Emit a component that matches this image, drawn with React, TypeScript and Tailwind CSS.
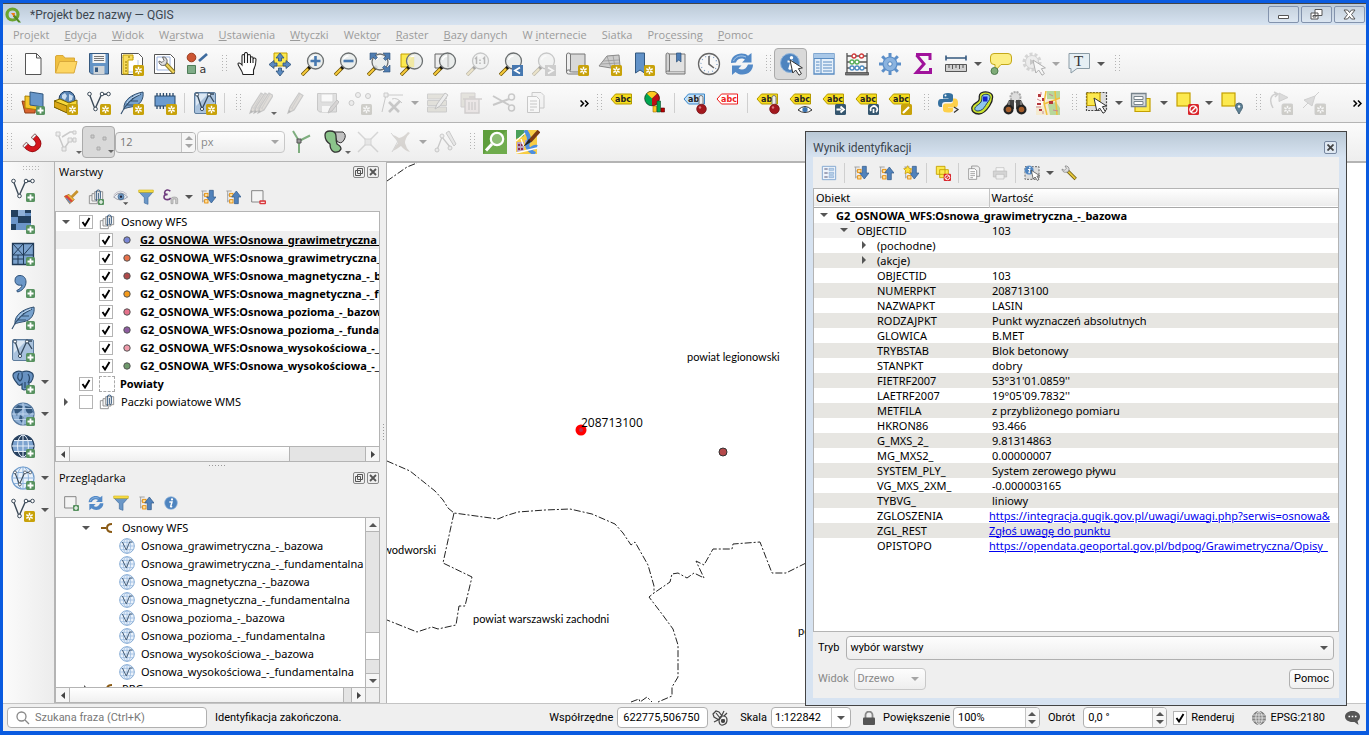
import React from "react";

type P = { children?: React.ReactNode };

/* ---------- drawing helpers ---------- */
const Svg = ({ children, size = 24 }: P & { size?: number }) => (
  <svg width={size} height={size} viewBox="0 0 24 24" fill="none" aria-hidden="true" className="shrink-0">
    {children}
  </svg>
);
const Star = ({ c = "#c8a20a" }: { c?: string }) => (
  <g>
    <rect x="13" y="13" width="11" height="11" rx="1.5" fill={c} />
    <path d="M18.5 14.8v7.4M15.3 16.6l6.4 3.8M21.7 16.6l-6.4 3.8" stroke="#fff" strokeWidth="1.5" />
    <circle cx="18.5" cy="18.5" r="0.9" fill={c} />
  </g>
);
const Plus = () => (
  <g>
    <rect x="15" y="15" width="9" height="9" rx="1.5" fill="#589260" />
    <path d="M19.5 16.5v6M16.5 19.5h6" stroke="#fff" strokeWidth="1.8" />
  </g>
);
const Lens = ({ x = 14.5, y = 9 }: { x?: number; y?: number }) => (
  <g>
    <path d="M8.5 15.5 1 23" stroke="#6b5200" strokeWidth="3.6" />
    <path d="M7 17 1.3 22.7" stroke="#f8cb3c" strokeWidth="2" />
    <path d="m10 14-2.4 2.4" stroke="#111" strokeWidth="3.2" />
    <circle cx={x} cy={y} r="8" fill="#e9eceb" fillOpacity="0.9" stroke="#6b6f70" strokeWidth="1.3" />
    <path d="M9.5 8a5.2 5.2 0 0 1 5-4" stroke="#fff" strokeWidth="1.4" />
  </g>
);
const Cursor = () => (
  <path d="m11 8 2.8 13 2.9-3 3.3 5.2 2.4-1.5-3-5 4-.8z" fill="#fff" stroke="#333" strokeWidth="1" />
);
const Vee = () => (
  <g stroke="#3c4a58" strokeWidth="1.4">
    <path d="M2.5 3.5 8 18 14.500 3.500 21.500 3" />
    <g fill="#fff" strokeWidth="1">
      <circle cx="2.500" cy="3" r="1.800" />
      <circle cx="8.500" cy="18" r="1.800" />
      <circle cx="15" cy="3" r="1.800" />
      <circle cx="21.500" cy="3" r="1.800" />
    </g>
  </g>
);
const Tag = ({ t = "abc", fill = "#f5dd1e", line = "#b79a00", ink = "#222" }) => (
  <g>
    <path d="M1 8 5.500 3H21.500V13H5.500z" fill={fill} stroke={line} strokeWidth="1" />
    <text x="5" y="11" fontSize="8" fontWeight="700" fontFamily="DejaVu Sans, sans-serif" fill={ink}>{t}</text>
  </g>
);
const Pin = () => (
  <g>
    <path d="M16 13V6.500a2 2 0 0 1 4 0V13" fill="#eee" stroke="#777" strokeWidth="1" />
    <circle cx="18.500" cy="18" r="4.800" fill="#a3181e" stroke="#6e0c10" strokeWidth="0.700" />
    <circle cx="17" cy="16.500" r="1.200" fill="#d9797c" />
  </g>
);
const DarkBadge = ({ children }: P) => (
  <g>
    <rect x="13" y="13" width="11" height="11" rx="1.500" fill="#35566f" />
    {children}
  </g>
);
const Pencil = ({ x = 0 }: { x?: number }) => (
  <g transform={`translate(${x} 0)`}>
    <path d="M3 22 5 16 14 2l4 2.500L9 19z" fill="#c4b09a" stroke="#777" strokeWidth="1.200" />
    <path d="m5 16 4 3M15 3 7 17" stroke="#888" />
    <path d="m3 22 1-3 2 1.700z" fill="#444" />
  </g>
);
const TreeLines = ({ children }: P) => (
  <Svg>
    <path d="M2 3h8M4 3v17M4 9h4M4 18h4" stroke="#999" strokeWidth="1.300" />
    <rect x="7" y="6.500" width="5" height="5" fill="#ffe1a3" stroke="#e48a00" strokeWidth="1.300" />
    <rect x="7" y="16" width="5" height="5" fill="#ffe1a3" stroke="#e48a00" strokeWidth="1.300" />
    {children}
  </Svg>
);
const arrowDown = <path d="M14 2h6v10h4l-7 9-7-9h4z" fill="#5182bb" stroke="#2c5585" strokeWidth="1" />;
const arrowUp = <path d="M14 22h6V12h4l-7-9-7 9h4z" fill="#5182bb" stroke="#2c5585" strokeWidth="1" />;
const refresh = (
  <g fill="#5289c7">
    <path d="M1 11C1 5 6 1.500 11.500 1.500c3 0 5 .8 6.500 2.300L21.500 1v9.500H12l3-3C12.500 5.500 7 6 6 10.500z" />
    <path d="M23 12.500c0 6-4.500 10-10.500 10-3 0-5.200-1-7-2.600L2 23v-9.500h9.500l-3 3c3 2 7.500 1.500 9.500-4z" />
    <path d="M3.500 9C5 4.500 11 2.500 16 5" stroke="#a8c9ea" strokeWidth="1" fill="none" />
  </g>
);
const globe = (dark: boolean) => (
  <g>
    <circle cx="12" cy="12" r="11" fill={dark ? "#7da3cf" : "#eaf2fb"} stroke={dark ? "#27405e" : "#6f9bcb"} strokeWidth="1.200" />
    {dark && <path d="M3 6.500h18L18.500 3 12 1 5.500 3zM3 17.500h18L18.500 21 12 23l-6.500-2z" fill="#27405e" />}
    <path d="M12 1v22M1 12h22M3 6.500h18M3 17.500h18" stroke={dark ? "#e6eef8" : "#8fb4dc"} strokeWidth="1" />
    <ellipse cx="12" cy="12" rx="5.500" ry="11" stroke={dark ? "#e6eef8" : "#8fb4dc"} strokeWidth="1" />
  </g>
);
const feather = (
  <g>
    <path d="M4 18C3 9 12 3 23 1c1 6-2 14-12 15-3 .5-5 1-7 2z" fill="#78a2ce" stroke="#33506f" strokeWidth="1" />
    <path d="M1 23C5 14 12 7 21 3M7 14l8 0M10 10h8M12 8l1-3" stroke="#33506f" strokeWidth="1.100" />
    <path d="M7 12C9 8 14 5 20 3" stroke="#c9dff4" strokeWidth="1" />
  </g>
);
const filter = (
  <g>
    <path d="M1.500 4.500h21L15 13v10l-5.500-2v-8z" fill="#6b97c7" stroke="#3e6b9e" strokeWidth="1" />
    <path d="M1 1.500h22v3.500H1z" fill="#fbe14b" stroke="#c9a800" strokeWidth=".8" />
  </g>
);
const group = (
  <g stroke="#888" strokeWidth="1.300">
    <path d="M6 10H2v12h12v-3" />
    <path d="M10 7H6v11h12v-2" fill="#f2f2f2" />
    <path d="M10 4h12v12H10z" fill="#f7f7f7" />
    <path d="M12.500 18V4.500a3 3 0 0 1 6 0V14a1.500 1.500 0 0 1-3 0V6" stroke="#35597f" strokeWidth="1.500" />
  </g>
);
const chip = (
  <g>
    <path d="M4 2v16M7.200 2v16M10.400 2v16M13.600 2v16M16.800 2v16M20 2v16" stroke="#29496b" strokeWidth="1.300" />
    <rect x="2" y="5" width="20" height="10" fill="#6b9bd0" stroke="#29496b" />
  </g>
);
const vBox = (
  <g>
    <rect x="1.500" y="1.500" width="21" height="21" rx="1.500" fill="#a9c2dd" stroke="#5d7c9c" />
    <path d="M3 3h12L3 15z" fill="#dbe7f3" />
    <path d="M4 3 9 18 16 3l5 8M16 3h5" stroke="#34495e" strokeWidth="1.300" />
    <g fill="#fff" stroke="#34495e"><circle cx="4" cy="3.500" r="1.600" /><circle cx="9" cy="18" r="1.600" /><circle cx="16" cy="3.500" r="1.600" /></g>
  </g>
);
const info = (
  <g>
    <circle cx="11" cy="11" r="9.500" fill="#4e84bf" stroke="#8fb4dc" strokeWidth="1" />
    <circle cx="12.500" cy="5.700" r="1.700" fill="#fff" />
    <path d="M8.500 9.500h4l-2 7q1 .5 2-.7" stroke="#fff" strokeWidth="2.200" />
  </g>
);
const yellowSq = <rect x="2" y="2" width="13" height="13" fill="#fce94f" stroke="#c4a000" strokeWidth="1.200" />;
const noEntry = (
  <g>
    <rect x="13" y="13" width="11" height="11" rx="1.500" fill="#d9262c" />
    <circle cx="18.500" cy="18.500" r="3.600" stroke="#fff" strokeWidth="1.400" />
    <path d="m16 21 5-5" stroke="#fff" strokeWidth="1.400" />
  </g>
);

/* ---------- icons ---------- */
const ic = {
  new: <path d="M4.500 1.500h11l4.500 4.500v16.500H4.500zM15.500 1.500V6H20" fill="#fff" stroke="#555" />,
  open: (
    <g stroke="#d9a93a">
      <path d="M1.500 21V5q0-1.500 1.500-1.500h6l2 2.500h9.500v4" fill="#f0c040" />
      <path d="M1.500 21 5.500 9.500h17.500L20 21z" fill="#fdd663" />
    </g>
  ),
  save: (
    <g>
      <path d="M2.500 1.500h19v20.500h-17l-2-2z" fill="#6494c6" stroke="#36597f" />
      <path d="M5.500 2h13v9h-13z" fill="#f4f4f4" /><path d="M7 4.500h10M7 6.500h10M7 8.500h10" stroke="#777" />
      <path d="M6.500 14h11v8h-11z" fill="#cfd4d8" /><path d="M8 15.500h3V20H8z" fill="#36597f" />
    </g>
  ),
  layout: (
    <g>
      <path d="M1.500 1.500h17l4 4v17h-21z" fill="#fff" stroke="#555" />
      <path d="M2 5.500h12M8 20h8M18 8v10" stroke="#b9cbe8" />
      <path d="M3 3h10v5H8v14H3z" fill="#f8dc5c" stroke="#c4a000" /><path d="M5 10h2M5 13h2M5 16h2M5 19h2M9 4v2" stroke="#8a7000" />
      <Star />
    </g>
  ),
  layoutMgr: (
    <g>
      <path d="M1.500 2.500h16l4 4v15h-20z" fill="#fff" stroke="#555" /><path d="M4 5h13v13H4z" stroke="#9db4e0" />
      <path d="m12 11 9 9.500" stroke="#8d7a22" strokeWidth="4" /><path d="m13 12 8 8.500" stroke="#f0d45c" strokeWidth="2" />
      <path d="M9.500 5a4 4 0 0 1 4.500 5l-1.500 3-3 .5A4 4 0 0 1 6 9l3 1.500 2-2z" fill="#ddd" stroke="#666" />
    </g>
  ),
  style: (
    <g>
      <circle cx="5.500" cy="5.500" r="4.300" fill="#cc5533" stroke="#9b3a1c" />
      <path d="m13 9 8-7" stroke="#3e6b9e" strokeWidth="2.600" />
      <path d="M1.500 13.500h8v8h-8z" fill="#7fac88" stroke="#4f7d58" />
      <text x="13.500" y="21" fontSize="11" fontFamily="DejaVu Sans, sans-serif" fill="#333">a</text>
    </g>
  ),
  hand: (
    <path d="M8 22.500C7 18 3 14 3 12c0-1.500 2-1.500 4 1V4c0-2 2.500-2 2.500 0V2c0-2 3-2 3 0v2c0-2 3-2 3 0v2c0-1.600 2.600-1.600 2.600 0v1c.5-1.600 2.900-1.300 2.900.5 0 6-1 8-2.500 10.500V22.500z M9.500 4v7M12.500 3v8M15.500 4v7M18 6v5" fill="#fff" stroke="#222" strokeWidth="1.100" />
  ),
  pan: (
    <g>
      <path d="M6 1h13v13H6z" fill="#fce94f" stroke="#c4a000" />
      <g fill="#5a8ac0" stroke="#2d5078" strokeWidth=".8">
        <path d="m12 1 4 5h-2.500v3h-3V6H8zM12 24l4-5h-2.500v-3h-3v3H8zM1 12.500l5-4v2.500h3v3H6v2.500zM23 12.500l-5-4v2.500h-3v3h3v2.500z" />
      </g>
    </g>
  ),
  zin: <g><Lens /><path d="M14.500 4v10M9.500 9h10" stroke="#4678b0" strokeWidth="2.600" /></g>,
  zout: <g><Lens /><path d="M9.500 9h10" stroke="#4678b0" strokeWidth="2.600" /></g>,
  zfull: (
    <g><Lens x={13} y={10} />
      <g fill="#4f7db1" stroke="#2d5078" strokeWidth=".6">
        <path d="M3 1h7L8 3l2.500 2.500-2 2L6 5 3 8zM23 1v7l-2-2-2.500 2.500-2-2L19 4l-3-3zM23 20h-7l2-2-2.500-2.500 2-2L20 16l3-3z" />
      </g>
    </g>
  ),
  zsel: <g><path d="M1 2h13v13H1z" fill="#fce94f" stroke="#c4a000" /><Lens /><path d="M8 5h6v10H9z" fill="#f3e88c" opacity=".7" /></g>,
  zlayer: <g><path d="M2 2h14v14H2z" fill="#eee" stroke="#666" /><Lens /><path d="M15 2v13" stroke="#aaa" /></g>,
  znat: <g><Lens /><path d="m9 7 1.500-1.500V12M17 7l1.500-1.500V12M14 7.500v1.500M14 10.500V12" stroke="#444" strokeWidth="1.500" /></g>,
  zlast: <g><Lens /><path d="M13 13h11v11H13z" fill="#4678b0" /><path d="m21 15.500-5 3 5 3" stroke="#fff" strokeWidth="1.800" /></g>,
  znext: <g><Lens /><path d="M13 13h11v11H13z" fill="#888" /><path d="m16 15.500 5 3-5 3" stroke="#fff" strokeWidth="1.800" /></g>,
  mapNew: <g><path d="M5 2h15v18H5z" fill="#d8d8d8" stroke="#777" /><path d="M1.500 20V3q0-2 2-2t2 2v15H3q-1.500 0-1.500 2t2 2h12" fill="#efefef" stroke="#777" /><Star /></g>,
  map3d: <g><path d="M1 14 9 4l12-1 1 11-9 2z" fill="#ccc" stroke="#888" /><path d="m5 9 16-1M9 4l4 12M15 3.500 17 15M3 12l18-1" stroke="#999" strokeWidth=".8" /><Star /></g>,
  bmNew: <g><path d="M4.500 1h9v20l-4.500-3-4.500 3z" fill="#6292c8" stroke="#33587f" /><Star /></g>,
  bmShow: <g><path d="M5 2h16v18H5z" fill="#e2e2e2" stroke="#777" /><path d="M2 20V3q0-2 1.500-2T5.500 3v16H4q-2 0-2 1.500T4 22h17v-2" fill="#d2d2d2" stroke="#777" /><path d="M12.500 1h4.500v9l-2.200-2-2.300 2z" fill="#4d7db5" stroke="#2d5078" strokeWidth=".7" /></g>,
  clock: <g><circle cx="12" cy="12" r="10.500" fill="#f8f8f8" stroke="#666" strokeWidth="1.300" /><circle cx="12" cy="12" r="8" stroke="#7a9cc4" strokeWidth="1.200" strokeDasharray="1 3.190" /><path d="M12 4v8l5 4" stroke="#666" strokeWidth="1.600" /></g>,
  refresh,
  identify: <g>{info}<Cursor /></g>,
  table: <g><path d="M2 2h20v20H2z" fill="#e6f0fa" stroke="#5a8cc2" strokeWidth="1.300" /><path d="M2 2h20v4.500H2z" fill="#a9c8e8" /><path d="M2 6.500h20M9 6.500V22M4 10h3.500M4 13h3.500M4 16h3.500M4 19h3.500M11 10h9M11 13h9M11 16h9M11 19h9" stroke="#5a8cc2" /></g>,
  abacus: (
    <g>
      <path d="M2 1v20M22 1v20M2 4h20M2 10h20M2 16h20" stroke="#555" strokeWidth="1.300" /><path d="M.5 20.500h23v2.500H.5z" fill="#777" stroke="#444" strokeWidth=".7" />
      <g fill="#fff"><g stroke="#d03a3a" strokeWidth="1.300"><circle cx="9" cy="4" r="2" /><circle cx="16.500" cy="4" r="2" /></g><g stroke="#58b058" strokeWidth="1.300"><circle cx="7" cy="10" r="2" /><circle cx="12" cy="10" r="2" /></g><g stroke="#4d8ac0" strokeWidth="1.300"><circle cx="7" cy="16" r="2" /><circle cx="12" cy="16" r="2" /><circle cx="17" cy="16" r="2" /></g></g>
    </g>
  ),
  gear: (
    <g>
      <path d="M12 1v22M1 12h22M4.200 4.200l15.600 15.600M19.800 4.200 4.200 19.800" stroke="#5b8ec8" strokeWidth="3" />
      <circle cx="12" cy="12" r="7" fill="#8bb3df" stroke="#5b8ec8" strokeWidth="1.200" /><circle cx="12" cy="12" r="2.200" fill="#fff" stroke="#4f82bb" />
    </g>
  ),
  sigma: <path d="M5 2.500h14V8M5.500 3 13 12 5.500 20.500H19.500V16" stroke="#a0129b" strokeWidth="3" />,
  ruler: <g><path d="M2 6h20M2 3.500v5M22 3.500v5" stroke="#35597f" strokeWidth="1.600" /><path d="M1.500 12.500h21v7h-21z" fill="#d0d0d0" stroke="#555" /><path d="M5 13v3M8.500 13v4M12 13v3M15.500 13v4M19 13v3" stroke="#555" /></g>,
  tip: <g><path d="M5 1.500h14q3.500 0 3.500 3.500v4q0 3.500-3.500 3.500H12L6 19V12.500H5Q1.500 12.500 1.500 9V5q0-3.500 3.500-3.500z" fill="#fcee85" stroke="#c4a81a" /><circle cx="5.500" cy="19" r="3.500" fill="#7fac78" stroke="#4c7a4c" /></g>,
  action: <g><circle cx="10" cy="10" r="8" stroke="#999" strokeWidth="3" strokeDasharray="3 2" /><circle cx="10" cy="10" r="6.500" fill="#ddd" stroke="#888" /><path d="m8 7 5 3-5 3z" fill="#777" /><Cursor /></g>,
  text: <g><path d="M2 1.500h20.500v15H10L4 21V16.500H2z" fill="#e6eff4" stroke="#8a9ba5" /><text x="7" y="14" fontSize="15" fontFamily="Liberation Serif, serif" fill="#333">T</text></g>,
  dsm: (
    <g><path d="m1 10 14 2-1 10-10 0z" fill="#d9652f" stroke="#8e3c14" /><path d="m4 5 14 1v13L4 17z" fill="#f5c62c" stroke="#a87f00" /><path d="m9 1 13 2v13L9 14z" fill="#6796c9" stroke="#33587f" /><Plus /></g>
  ),
  box: (
    <g><circle cx="13" cy="8" r="8" fill="#5884b5" stroke="#223e5f" /><path d="m8 4 3-2 2 3-2 4-3-2zM15 3l4 2-1 4-3 1z" fill="#c8dcf0" />
      <path d="m0 10 6-2 9 4 8-3v8l-9 5-14-6z" fill="#f7d93c" stroke="#7b6400" /><path d="m0 10 13 5v7L0 16z" fill="#dba818" stroke="#7b6400" /><Star /></g>
  ),
  vnew: <g><Vee /><Star /></g>,
  fnew: <g>{feather}<Star /></g>,
  chip: <g>{chip}<Star /></g>,
  vbox: <g>{vBox}<Star /></g>,
  pens: <g><Pencil x={-2} /><Pencil x={2} /><Pencil x={6} /></g>,
  pen: <Pencil x={3} />,
  saveEdit: <g><path d="M2.500 2.500h19V21h-17l-2-2z" fill="#bbb" stroke="#777" /><path d="M6 3h12v8H6z" fill="#fff" stroke="#999" /><path d="M7 15h8v6H7z" fill="#fff" /><path d="m13 22 2-5 7-8 2 2-7 9z" fill="#a99" stroke="#666" /></g>,
  dots: <g><g fill="#ddd" stroke="#777"><circle cx="10" cy="4" r="2.500" /><circle cx="3.500" cy="12" r="2.500" /><circle cx="20" cy="5" r="2.500" /></g><Star c="#8f8a70" /></g>,
  vertex: <g stroke="#777"><path d="M5 4 1 21M5 4h17" /><path d="M3 2h4v4H3z" fill="#ddd" /><path d="m8 11 10 10M19 10 8 21" strokeWidth="2.600" /><path d="M11 8q5-2 10 4" /></g>,
  multi: <g stroke="#888"><path d="M1.500 3h19v5h-19zM1.500 9.500h19v5h-19zM1.500 16h19v5h-19z" fill="#c5bc9a" /><path d="m9 18 2-5 8-11 3 2-8 11z" fill="#ddd" stroke="#666" /></g>,
  trash: <g stroke="#988"><path d="M2 2h14v14H2z" fill="#c5bf9e" /><path d="M6 8h14v14H6zM4 8h19M10 6h6M10 11v8M13 11v8M16 11v8" fill="#e5caca" strokeWidth="1.400" /></g>,
  cut: <g stroke="#777" strokeWidth="1.500"><path d="m1 5 16 9M1 14l16-6" strokeWidth="2" /><circle cx="19.500" cy="6" r="3" /><circle cx="19.500" cy="17" r="3" /></g>,
  copy: <g stroke="#777"><path d="M7 1.500h9l3 3V17H7z" fill="#eee" /><path d="M2.500 5.500h9l3 3v13h-12z" fill="#fff" /><path d="M5 10h7M5 13h7M5 16h7M5 19h4" /></g>,
  abc: <Tag />,
  chart: (
    <g><circle cx="9" cy="7.500" r="7.500" fill="#00a651" /><path d="M9 7.500 3.500 2.300a7.500 7.500 0 0 1 11 0z" fill="#ffc91e" /><path d="m9 7.500 5.500-5.200a7.500 7.500 0 0 1-5.500 12.700z" fill="#c00f15" />
      <circle cx="9" cy="7.500" r="7.300" stroke="#222" strokeWidth=".6" />
      <path d="M10 15h3.500v6H10z" fill="#ffc91e" stroke="#a06a00" strokeWidth=".6" /><path d="M14 10h3.500v11H14z" fill="#00a651" stroke="#0b4d2a" strokeWidth=".6" /><path d="M18 17h3.500v4H18z" fill="#b00" stroke="#500" strokeWidth=".6" /></g>
  ),
  abPin: <g><Tag t="ab" fill="#bfe0fb" line="#3c87c8" /><Pin /></g>,
  abcRed: <Tag fill="#fff" line="#ee1c1c" ink="#ee1c1c" />,
  abY: <g><Tag t="ab" /><Pin /></g>,
  abcEye: <g><Tag /><path d="M9 19q7-7 14 0-7 5-14 0z" fill="#fff" stroke="#333" /><circle cx="16" cy="18.500" r="2.600" fill="#3d74b0" /></g>,
  abcArr: <g><Tag /><DarkBadge><path d="M14.500 18.500h5M18.500 15.500l3.500 3-3.500 3" stroke="#fff" strokeWidth="1.800" /></DarkBadge></g>,
  abcRot: <g><Tag /><DarkBadge><path d="M16 20a3.300 3.300 0 1 1 5 1M18.500 22V18" stroke="#fff" strokeWidth="1.700" /></DarkBadge></g>,
  abcEd: <g><Tag /><rect x="13" y="13" width="11" height="11" rx="1.500" fill="#c8a20a" /><path d="m15 22 6-6" stroke="#fff" strokeWidth="2.200" /></g>,
  python: (
    <g><path d="M6 8V4.500Q6 2 11 2t5 2.500V9q0 2-2 2H8q-3 0-3 3v2H3.500Q1 16 1 12t3-4h7.500V7.500H6z" fill="#35709f" /><path d="M16 7.500h2q3 0 3 4.500t-3 4.500h-7V17h5v2.500Q16 21.500 11 21.500T6 19v-4q0-2.500 2.500-2.500h5q2.500 0 2.500-2.500z" fill="#fdd04a" />
      <circle cx="8.500" cy="4.500" r="1" fill="#fff" /><path d="m17 16 4 2.500-4 3" stroke="#333" strokeWidth="1.200" /></g>
  ),
  blob: <g><path d="M11 2c5-2.500 11-.5 11.500 3 .5 4-1 7-3 10S14 23 9 23s-8-3-7-7 6-4 7-7-1-5 2-7z" fill="#cbe32c" stroke="#222" strokeWidth="1.300" /><path d="M13 4c4-1.500 7-.5 7 2.500s-3 5-4.500 8S11 20 8 20s-4-2-2.500-4 5-3 6-6-.5-5 1.500-6z" fill="#8ec5ee" stroke="#22415c" /><path d="M13 5.500h4.500v5H13z" fill="#1420d0" /></g>,
  bino: (
    <g><circle cx="12.500" cy="6" r="5" fill="#ddd" stroke="#aaa" strokeWidth="2" strokeDasharray="2 1" /><path d="M2 17 6 9h5v9zM22 17 18 9h-5v9z" fill="#444" /><circle cx="5.500" cy="18.500" r="5" fill="#222" /><circle cx="18.500" cy="18.500" r="5" fill="#222" /><circle cx="5.500" cy="18.500" r="2.800" fill="#a55d2a" /><circle cx="18.500" cy="18.500" r="2.800" fill="#a55d2a" /><path d="M6 10v4M18 10v4" stroke="#888" strokeWidth="1.500" /></g>
  ),
  mapTile: (
    <g><path d="M0 0h24v24H0z" fill="#f4ead0" /><path d="M0 0h9l2 8-5 7H0z" fill="#fff8f6" /><path d="M11 0h13v8H11zM12 13l8-2 4 6v7H14z" fill="#b8d79b" /><path d="M10 0 8 12l3 12M8 13l16-6M19 0l2 24" stroke="#f0bf3c" strokeWidth="1.500" /><path d="M2 3h3v3H2zM6 7h2v3H6zM1 12h4v2H1zM13 10h4v3h-4zM3 18h3v2H3z" fill="#b3363c" /><path d="M5 1v3M1 8l4 2M0 16h5M7 20v3M13 3l4 2M17 19l5 1" stroke="#c98890" /></g>
  ),
  selRect: <g><path d="M1.500 1.500h20v18h-20z" fill="#ddd" stroke="#444" strokeWidth="1.200" strokeDasharray="2 1.200" /><path d="M2 2h13v12.500H2z" fill="#fce94f" stroke="#c4a000" strokeWidth="1.200" /><g transform="translate(-2 -1)"><Cursor /></g></g>,
  selForm: <g><path d="M5 7.500h15V20.500H5z" fill="#fce94f" stroke="#c4a000" strokeWidth="1.200" /><path d="M1.500 2.500h14.500v13H1.500z" fill="#d8dde0" stroke="#78848c" strokeWidth="1.300" /><path d="M4 5.500h9v3H4zM4 10.500h9v3H4z" fill="#fff" stroke="#78848c" /></g>,
  selNone: <g>{yellowSq}{noEntry}</g>,
  selLoc: <g>{yellowSq}<path d="M19 23c-2-4-3.500-5-3.500-7.500a3.500 3.500 0 0 1 7 0C22.500 18 21 19 19 23z" fill="#5f8296" stroke="#4a6677" /><circle cx="19" cy="15.500" r="1.200" fill="#fff" /></g>,
  rotF: <g stroke="#888"><path d="M4 17C-1 8 3 3 8 3M5 1l4 2-3 3" strokeWidth="1.500" /><path d="m10 2 9 4.500-9 4z" fill="#aaa" /><Star c="#8f8a70" /></g>,
  mirF: <g stroke="#888"><path d="M1 17 17 1" /><path d="m2 9 11-4-3 10z" fill="#aaa" /><Star c="#8f8a70" /></g>,
  magnet: (
    <g>
      <path d="M3.500 14 7 17.500q4.500 3.500 8.500 0t0-8.500L12 5.500" stroke="#8d0b10" strokeWidth="5.600" />
      <path d="M3.500 14 7 17.500q4.500 3.500 8.500 0t0-8.500L12 5.500" stroke="#d3161c" strokeWidth="4.200" />
      <path d="m3.500 14 1.700 1.700M12 5.500l1.700 1.700" stroke="#888" strokeWidth="5.600" />
      <path d="m4 14.500.9.900M12.500 6l.9.900" stroke="#fff" strokeWidth="4.200" />
    </g>
  ),
  snapV: <g stroke="#777"><path d="m4 4 6 15 6-9h6M8 7l8-5h5" strokeWidth="1.500" /><g fill="#ddd"><path d="M2 2h4v4H2zM8 17h4v4H8zM14 8h4v4h-4zM19 1h3v3h-3zM19 8h3v4h-3z" /></g></g>,
  snapP: <g fill="#ccc" stroke="#aaa"><path d="M4 5h3v3H4zM16 7h3v3h-3zM10 17h3v3h-3z" /></g>,
  topo: <g><path d="m9 11 11-5.500M9 11 3 1M9 11v12" stroke="#7fae7f" strokeWidth="2" /><path d="M7 9h4v4H7z" fill="#999" stroke="#555" /></g>,
  shapes: <g stroke="#333"><path d="M10 2h10q4 3 1 8t-7 1z" fill="#c2c2c2" /><path d="M2 5q0-4 5-4 6 0 6 5t1 8q4 2 4 5-2 4-7 3-4-2-4-8-5-3-5-9z" fill="#8bc48b" strokeWidth="1.300" /></g>,
  cross: <g stroke="#999"><path d="m2 2 20 20M22 2 2 22" strokeWidth="1.500" /><path d="M9 9h6v6H9z" fill="#ccc" /></g>,
  self: <g><path d="M3 5q3 0 7 3 5-1 9-6l2 1q-5 5-5 10 1 5 5 9-5-1-9-6-4 3-8 5 2-5 5-8-2-4-6-8z" fill="#a98" /><path d="m2 3 7 8-6 11" stroke="#999" /></g>,
  trace: <g stroke="#777"><path d="M3 20 8 7l8 10" strokeWidth="1.300" /><circle cx="3" cy="20" r="2" fill="#ddd" /><circle cx="8" cy="6" r="2" fill="#ddd" /><circle cx="16" cy="18" r="2" fill="#ddd" /><path d="m12 3 3-2 7 13-2 2z" fill="#ccc" /></g>,
  osmSearch: <g><path d="M0 0h24v24H0z" fill="#5f9e3d" /><path d="M0 24 24 0v24z" fill="#79b559" opacity=".6" /><circle cx="14" cy="9" r="6.200" fill="#8cbd73" stroke="#fff" strokeWidth="2.200" /><path d="m9 14-6 6.500" stroke="#fff" strokeWidth="3" /></g>,
  osmEdit: (
    <g><path d="M0 0h21v24H0z" fill="#f8cd45" /><path d="M0 0h8v6L0 9z" fill="#4ba05a" /><path d="M1 12h7v10H1zM9 10h3v4H9z" fill="#b9a3bf" /><path d="M2 14h2v2H2zM5 14h2v2H5zM2 18h2v2H2zM5 18h2v2H5z" fill="#8a2d52" />
      <path d="M9 0q6 8 3 13t7 11M14 20q4-4 7-3" stroke="#4d8fe0" strokeWidth="4" /><path d="M0 11 9 3M0 23l21-5M5 9l3 8" stroke="#fff" strokeWidth="1.300" /><path d="m23 1-9 10" stroke="#7a3a12" strokeWidth="3.800" /><path d="m13 9-6 8 8-5z" fill="#222" /></g>
  ),
  vAdd: <g><Vee /><Plus /></g>,
  raster: (
    <g><path d="M0 0h20v20H0z" fill="#6b95c8" /><path d="M0 0h7v7H0zM13 6h7v7h-7zM7 6h6v7H7zM0 14h5v6H0zM14 0h6v3h-6z" fill="#22405f" /><path d="M7 0h7v6H7z" fill="#8eb0d8" /><Plus /></g>
  ),
  mesh: <g><path d="M1.500 1.500h21v21h-21z" fill="#7ba2cd" stroke="#223c58" strokeWidth="1.300" /><path d="M1.500 13h21M12.500 1.500v21M2 2l10 11M12 2 2 13M22 2 12.500 13M7 13v9M2 17h10" stroke="#223c58" strokeWidth="1" /><Plus /></g>,
  comma: <g><path d="M9 1.500c4 0 6 3 6 6.500 0 5-4 9-8.500 10l-.7-1.500C9 15 11 13 11 11c-4 1-7-1-7-4.500S6 1.500 9 1.500z" fill="#6b97c8" stroke="#2d5078" /><Plus /></g>,
  fAdd: <g>{feather}<Plus /></g>,
  vbAdd: <g>{vBox}<Plus /></g>,
  pg: <g><path d="M3 3Q7 0 11 2q6-2 10 1 3 3-1 9l-2 1v4q-2 3-5 3l-2-1V14Q8 17 6 13 0 6 3 3z" fill="#6892c2" stroke="#28486b" strokeWidth="1.200" /><path d="M8 3Q5 8 9 11q3-2 2-8M17 4q3 4 0 9M14 12v6" stroke="#28486b" strokeWidth="1.200" /><Plus /></g>,
  wms: <g><circle cx="12" cy="12" r="11" fill="#8fb0d5" stroke="#56799f" strokeWidth="1.200" /><path d="m3 7 4-4 5 1-1 4-4 3-1 3-2-3zM14 4l6 1 2 5-4 3-3-4zM9 13l4 2-2 6-3-4zM16 15l4 1-3 4z" fill="#35597f" /><path d="M12 1v22M1 12h22M3 6.500h18M3 17.500h18" stroke="#c9dcf0" strokeWidth=".8" /><Plus /></g>,
  wcs: <g>{globe(true)}<Plus /></g>,
  wfs: <g>{globe(false)}<g transform="translate(2 4) scale(.8)"><Vee /></g><Plus /></g>,
  wfsSmall: <g>{globe(false)}<path d="m5 6 6 12 5-12h4" stroke="#4a6078" strokeWidth="1.500" /></g>,
  brush: <g><path d="m13 12 9-9" stroke="#c8922e" strokeWidth="4" /><path d="m2 11 7-3 8 8-7 6z" fill="#f1b93a" stroke="#a06a18" /><path d="m2 11 4-2 9 9-3 2z" fill="#d9463a" /><path d="m5 14 6 7" stroke="#5e86c8" strokeWidth="2" /></g>,
  groupAdd: <g>{group}<Plus /></g>,
  eye: <g><path d="M1 12Q11 0 22 12 11 21 1 12z" fill="#e8eef4" stroke="#778" /><circle cx="12" cy="11.500" r="4.500" fill="#6e9ac8" stroke="#3a5a7c" /><circle cx="12" cy="11.500" r="1.800" fill="#223" /><path d="M1 9Q11-2 21 8" stroke="#aab" /><path d="M15 20h8l-4 4z" fill="#555" /></g>,
  filter,
  eps: <g><path d="M11 3.500Q9 1 6 1.500T2.500 5 7 8Q1.500 8 1.500 12T7 16q3 0 4.500-2.500" stroke="#6d3a7d" strokeWidth="2.400" /><path d="M12 22v-7q0-3 5-3t5 3v7h-3v-7h-4v7z" fill="#ccc" stroke="#999" /></g>,
  sqMinus: <g><path d="M2.500 2.500h17v17h-17z" fill="#f4f4f4" stroke="#777" strokeWidth="1.300" /><rect x="14" y="17" width="10" height="6" rx="1.500" fill="#d9383c" /><path d="M16 20h6" stroke="#fff" strokeWidth="1.500" /></g>,
  sqPlus: <g><path d="M2.500 2.500h17v17h-17z" fill="#f4f4f4" stroke="#777" strokeWidth="1.300" /><Plus /></g>,
  info: <g transform="translate(1 1)">{info}</g>,
  form: <g><path d="M2 2h20v20H2z" fill="#eef4fb" stroke="#88abd2" strokeWidth="1.500" /><path d="M5 6h5M5 12h5M5 18h5" stroke="#557" strokeWidth="1.500" /><path d="M12 5h7v3h-7zM12 11h7v3h-7zM12 16h7v3h-7z" fill="#bdd3ec" stroke="#88abd2" /></g>,
  clear: <g><path d="M2 2h13v12H2zM7 7h13v12H7z" fill="#fce94f" stroke="#c4a000" strokeWidth="1.300" />{noEntry}</g>,
  print: <g stroke="#888"><path d="M6 4h12v6H6z" fill="#fff" /><path d="M2 9h20v9H2z" fill="#bbb" /><path d="M6 14h12v7H6z" fill="#eee" /></g>,
  idSel: <g><path d="M1.500 2.500h21v19h-21z" fill="#ddd" stroke="#666" strokeWidth="1.500" strokeDasharray="3 2" /><g transform="scale(.7)">{info}</g><Cursor /></g>,
  wrench: <g><path d="m10 9 12 12" stroke="#6f5d10" strokeWidth="5" /><path d="m11 10 10.500 10.500" stroke="#e8c93c" strokeWidth="2.800" /><path d="M6 1.500a5 5 0 0 1 6 6l-1.500 3-3.500.5a5 5 0 0 1-5.500-5L5 8l3-3z" fill="#ddd" stroke="#777" /></g>,
};
type Name = keyof typeof ic;

/* ---------- toolbar parts ---------- */
const Tri = ({ dim = false }: { dim?: boolean }) => (
  <svg width="8" height="4" viewBox="0 0 8 4" aria-hidden="true"><path d="M0 0h8L4 4z" fill={dim ? "#a5a5a5" : "#555"} /></svg>
);
const Chevrons = () => (
  <svg width="9" height="7" viewBox="0 0 9 7" fill="none" aria-hidden="true"><path d="m.5.5 3 3-3 3M5 .5l3 3-3 3" stroke="#000" strokeWidth="1.500" /></svg>
);
const Tool = ({ n, off = false, on = false, menu = false }: { n: Name; off?: boolean; on?: boolean; menu?: boolean }) => (
  <button
    type="button"
    aria-label={n}
    className={`relative flex h-8 w-[33px] shrink-0 items-center justify-center rounded-sm ${on ? "border border-[#ababab] bg-[#d9d9d9]" : ""}`}
  >
    <span className={off ? "opacity-35 grayscale-50" : ""}><Svg>{ic[n]}</Svg></span>
    {menu && <span className="absolute right-0 bottom-1"><svg width="6" height="3" viewBox="0 0 8 4"><path d="M0 0h8L4 4z" fill="#666" /></svg></span>}
  </button>
);
const Arrow = ({ dim = false }: { dim?: boolean }) => (
  <button type="button" aria-label="menu" className="flex h-8 w-3 shrink-0 items-center justify-center"><Tri dim={dim} /></button>
);
const Grip = ({ first = false }: { first?: boolean }) => (
  <span className={`flex shrink-0 justify-center ${first ? "w-[13px]" : "w-4 pl-1"}`}>
    <svg width="5" height="18" aria-hidden="true">
      <path d="M.5 0v18M4.500 0v18" stroke="#b4b4b4" strokeDasharray="1 2" />
    </svg>
  </span>
);
const Sep = () => <span className="flex w-[7px] shrink-0 justify-center"><span className="h-5 w-px bg-[#cfcfcf]" /></span>;
const Bar = ({ children }: P) => (
  <div className="flex h-[39px] items-center overflow-hidden border-b border-[#b4b4b4] bg-linear-to-b from-[#fbfbfb] to-[#eeeeee]">{children}</div>
);
const tools = (names: Name[], off = false) => names.map((n) => <Tool key={n} n={n} off={off} />);

/* ---------- form parts ---------- */
const Spin = ({ id, value, w, dim = false }: { id: string; value: string; w: string; dim?: boolean }) => (
  <span className={`flex h-[21px] shrink-0 overflow-hidden rounded-sm border border-[#b0b0b0] ${w} ${dim ? "bg-[#efefef] text-[#777]" : "bg-white"}`}>
    <input id={id} aria-label={id} defaultValue={value} className="min-w-0 flex-1 bg-transparent px-1 outline-none" />
    <span className="flex w-[14px] flex-col items-center justify-center gap-1 border-l border-[#c4c4c4] bg-[#f6f6f6]">
      <span className="rotate-180"><Tri dim={dim} /></span>
      <Tri dim={dim} />
    </span>
  </span>
);
const Combo = ({ id, value, cls, dim = false, split = false }: { id: string; value: string; cls: string; dim?: boolean; split?: boolean }) => (
  <span className={`relative flex items-center rounded-sm border ${dim ? "border-[#c8c8c8] text-[#888]" : "border-[#b0b0b0]"} ${split ? "bg-white" : "bg-linear-to-b from-[#fdfdfd] to-[#eeeeee]"} ${cls}`}>
    <select id={id} aria-label={id} className="h-full w-full appearance-none bg-transparent pr-5 pl-[3px] outline-none">
      <option>{value}</option>
    </select>
    <span className={`pointer-events-none absolute inset-y-0 right-0 flex w-[19px] items-center justify-center ${split ? "border-l border-[#c4c4c4]" : ""}`}><Tri dim={dim} /></span>
  </span>
);
const Check = ({ label, on = true }: { label: string; on?: boolean }) => (
  <span className="grid size-[14px] shrink-0 place-items-center">
    <input type="checkbox" aria-label={label} defaultChecked={on} className="col-start-1 row-start-1 size-[14px] appearance-none border border-[#b4b4b4] bg-white" />
    {on && (
      <svg width="10" height="10" viewBox="0 0 10 10" className="pointer-events-none col-start-1 row-start-1"><path d="m1.500 5 2.500 3.500L8.500 1" fill="none" stroke="#000" strokeWidth="1.900" /></svg>
    )}
  </span>
);
const Fold = ({ open }: { open: boolean }) => (
  <svg width="8" height="8" viewBox="0 0 8 8" className="shrink-0" aria-hidden="true"><path d={open ? "M0 2h8L4 6z" : "M2 0v8l4-4z"} fill="#555" /></svg>
);

/* ---------- docks ---------- */
const DockTitle = ({ t }: { t: string }) => (
  <div className="flex h-5 items-center gap-[2px] pr-px pl-1">
    <h2 className="flex-1">{t}</h2>
    <button type="button" aria-label="float" className="flex size-3 items-center justify-center rounded-xs border border-[#888]">
      <svg width="8" height="8" fill="none" stroke="#555"><path d="M2.500.5h5v5h-5zM.5 2.500h5v5h-5z" /></svg>
    </button>
    <button type="button" aria-label="close" className="flex size-3 items-center justify-center rounded-xs border border-[#888]">
      <svg width="8" height="8" fill="none" stroke="#555" strokeWidth="1.800"><path d="m1 1 6 6M7 1 1 7" /></svg>
    </button>
  </div>
);
const Mini = ({ children }: P) => <button type="button" aria-label="tool" className="flex h-6 w-[25px] shrink-0 items-center justify-center [&>svg]:size-4">{children}</button>;
const M = ({ n, off = false }: { n: Name; off?: boolean }) => <Mini><svg width="16" height="16" viewBox="0 0 24 24" fill="none" className={off ? "opacity-50 grayscale" : ""}>{ic[n]}</svg></Mini>;
const ScrollX = ({ children }: P) => (
  <div className="flex h-[15px] shrink-0 border-t border-[#b4b4b4] bg-[#e4e4e4]">
    <span className="flex w-[14px] items-center justify-center border-r border-[#b4b4b4] bg-[#f6f6f6]"><svg width="4" height="7"><path d="M4 0v7L0 3.500z" fill="#444" /></svg></span>
    {children}
    <span className="flex w-[14px] items-center justify-center border-l border-[#b4b4b4] bg-[#f6f6f6]"><svg width="4" height="7"><path d="M0 0v7l4-3.500z" fill="#444" /></svg></span>
  </div>
);

const layers = [
  ["G2_OSNOWA_WFS:Osnowa_grawimetryczna_-_bazowa", "#7a86d6"],
  ["G2_OSNOWA_WFS:Osnowa_grawimetryczna_-_fundamentalna", "#e8714a"],
  ["G2_OSNOWA_WFS:Osnowa_magnetyczna_-_bazowa", "#b04a4a"],
  ["G2_OSNOWA_WFS:Osnowa_magnetyczna_-_fundamentalna", "#f59b1c"],
  ["G2_OSNOWA_WFS:Osnowa_pozioma_-_bazowa", "#e5718b"],
  ["G2_OSNOWA_WFS:Osnowa_pozioma_-_fundamentalna", "#8e5ca0"],
  ["G2_OSNOWA_WFS:Osnowa_wysokościowa_-_bazowa", "#f09bab"],
  ["G2_OSNOWA_WFS:Osnowa_wysokościowa_-_fundamentalna", "#6f9a6c"],
];
const browse = ["grawimetryczna", "magnetyczna", "pozioma", "wysokościowa"].flatMap((k) => [`Osnowa_${k}_-_bazowa`, `Osnowa_${k}_-_fundamentalna`]);

const Layers = () => (
  <section className="flex min-h-0 flex-1 flex-col">
    <DockTitle t="Warstwy" />
    <div className="flex h-[29px] items-center pl-[3px]">
      <M n="brush" /><M n="groupAdd" /><M n="eye" /><M n="filter" /><M n="eps" />
      <Arrow />
      <Mini><TreeLines>{arrowDown}</TreeLines></Mini>
      <Mini><TreeLines>{arrowUp}</TreeLines></Mini>
      <M n="sqMinus" />
    </div>
    <div className="flex min-h-0 flex-1 flex-col border border-[#b4b4b4] bg-white font-['Noto_Sans',sans-serif]">
      <ul className="min-h-0 flex-1 overflow-hidden pt-px whitespace-nowrap">
        <li className="flex h-[18px] items-center pl-[6px]">
          <Fold open /><span className="ml-[9px] flex items-center gap-[6px]"><Check label="Osnowy WFS" /><Svg size={16}>{group}</Svg></span><span className="ml-[6px]">Osnowy WFS</span>
        </li>
        {layers.map(([t, c], i) => (
          <li key={t} className={`flex h-[18px] items-center pl-[43px] font-bold ${i === 0 ? "bg-[#efefef] underline" : ""}`}>
            <Check label={t} />
            <svg width="8" height="8" className="mr-[9px] ml-[10px] shrink-0"><circle cx="4" cy="4" r="3.200" fill={c} stroke="#555" /></svg>
            {t}
          </li>
        ))}
        <li className="flex h-[18px] items-center pl-[23px] font-bold">
          <Check label="Powiaty" /><span className="mr-[5px] ml-[6px] size-4 border border-dashed border-[#aaa]" />Powiaty
        </li>
        <li className="flex h-[18px] items-center pl-[6px]">
          <Fold open={false} /><span className="ml-[9px] flex items-center gap-[6px]"><Check label="Paczki powiatowe WMS" on={false} /><Svg size={16}>{group}</Svg></span><span className="ml-[6px]">Paczki powiatowe WMS</span>
        </li>
      </ul>
      <ScrollX><span className="w-[220px] border-r border-[#b4b4b4] bg-linear-to-b from-white to-[#f0f0f0]" /><span className="flex-1" /></ScrollX>
    </div>
  </section>
);

const Fork = () => (
  <svg width="12" height="10" className="mr-[9px] ml-[11px]"><path d="M0 5h5M11 1q-5 0-5 4t5 4" fill="none" stroke="#8a5a14" strokeWidth="2" /></svg>
);
const Browser = () => (
  <section className="flex shrink-0 flex-col">
    <div className="flex h-[6px] items-center justify-center"><svg width="17" height="1"><path d="M0 .5h17" stroke="#999" strokeDasharray="1 2" /></svg></div>
    <DockTitle t="Przeglądarka" />
    <div className="flex h-[29px] items-center pl-[3px]">
      <M n="sqPlus" /><M n="refresh" /><M n="filter" /><Mini><TreeLines>{arrowUp}</TreeLines></Mini><M n="info" />
    </div>
    <div className="border border-[#b4b4b4] bg-white font-['Noto_Sans',sans-serif]">
      <div className="flex h-[169px]">
        <ul className="min-w-0 flex-1 overflow-hidden pt-px whitespace-nowrap">
          <li className="flex h-[18px] items-center pl-[26px]"><Fold open /><Fork />Osnowy WFS</li>
          {browse.map((t) => (
            <li key={t} className="flex h-[18px] items-center gap-[6px] pl-[63px]"><Svg size={16}>{ic.wfsSmall}</Svg>{t}</li>
          ))}
          <li className="flex items-center pl-[26px]"><Fold open={false} /><Fork />PRG</li>
        </ul>
        <div className="flex w-[14px] flex-col border-l border-[#b4b4b4] bg-[#e4e4e4]">
          <span className="flex h-[14px] items-center justify-center border-b border-[#b4b4b4] bg-[#f6f6f6]"><span className="rotate-180"><Tri /></span></span>
          <span className="flex-1" />
          <span className="h-7 border-y border-[#b4b4b4] bg-white" />
          <span className="h-[13px]" />
          <span className="flex h-[14px] items-center justify-center border-t border-[#b4b4b4] bg-[#f6f6f6]"><Tri /></span>
        </div>
      </div>
      <div className="flex bg-[#efefef]">
        <div className="flex-1"><ScrollX><span className="flex-1 border-r border-[#b4b4b4] bg-linear-to-b from-white to-[#f0f0f0]" /><span className="w-[7px]" /></ScrollX></div>
        <span className="w-[14px] border-t border-l border-[#b4b4b4]" />
      </div>
    </div>
  </section>
);

const side: [Name, boolean][] = [
  ["vAdd", false], ["raster", false], ["mesh", false], ["comma", false], ["fAdd", false], ["vbAdd", false],
  ["pg", true], ["wms", true], ["wcs", false], ["wfs", true], ["vnew", true],
];

/* ---------- map ---------- */
const borders = [
  "M0 18 20 4 30 0",
  "M0 298 23 308 48 328 56 337 61 345 67 350 111 356 118 353 131 349 158 347 183 346 205 351 228 361 236 370 244 382 248 379 261 402 267 423 267 430",
  "M67 350 56 400 85 414 78 443 72 443 69 462 51 466 45 464 30 469 0 457",
  "M419 400 399 410 385 410 373 379 346 381 345 386 326 386 317 402 309 398 317 415 307 410 300 415 291 410 285 411 283 419 267 430 262 434 275 451 286 466 291 482 291 514 285 524 285 533 271 539",
  "M244 539 252 536 253 539 260 534 265 539",
];
const MapView = () => (
  <main className="relative min-w-0 flex-1 overflow-hidden border-t border-l border-[#b4b4b4] bg-white font-[Lato,sans-serif] text-[11px] leading-4">
    <svg className="absolute inset-0 size-full" fill="none" aria-label="map">
      {borders.map((d) => <path key={d} d={d} stroke="#222" strokeDasharray="7 2 2 2" />)}
      <circle cx="194" cy="267" r="5.500" fill="#f00" />
      <circle cx="194" cy="267" r="2" fill="#c03050" />
      <circle cx="336" cy="289" r="4" fill="#b5494b" stroke="#333" />
    </svg>
    <span className="absolute top-[186px] left-[300px]">powiat legionowski</span>
    <span className="absolute top-[252px] left-[194px] font-['Open_Sans',sans-serif] text-[12px]">208713100</span>
    <span className="absolute top-[379px] -left-[16px]">nowodworski</span>
    <span className="absolute top-[448px] left-[86px]">powiat warszawski zachodni</span>
    <span className="absolute top-[460px] left-[411px]">powiat</span>
  </main>
);

/* ---------- identify results ---------- */
const attrs: [string, string, boolean?][] = [
  ["OBJECTID", "103"], ["NUMERPKT", "208713100"], ["NAZWAPKT", "LASIN"], ["RODZAJPKT", "Punkt wyznaczeń absolutnych"],
  ["GLOWICA", "B.MET"], ["TRYBSTAB", "Blok betonowy"], ["STANPKT", "dobry"], ["FIETRF2007", "53°31'01.0859''"],
  ["LAETRF2007", "19°05'09.7832''"], ["METFILA", "z przybliżonego pomiaru"], ["HKRON86", "93.466"], ["G_MXS_2_", "9.81314863"],
  ["MG_MXS2_", "0.00000007"], ["SYSTEM_PLY_", "System zerowego pływu"], ["VG_MXS_2XM_", "-0.000003165"], ["TYBVG_", "liniowy"],
  ["ZGLOSZENIA", "https://integracja.gugik.gov.pl/uwagi/uwagi.php?serwis=osnowa&", true],
  ["ZGL_REST", "Zgłoś uwagę do punktu", true],
  ["OPISTOPO", "https://opendata.geoportal.gov.pl/bdpog/Grawimetryczna/Opisy_", true],
];
const Identify = () => (
  <div role="dialog" aria-label="Wynik identyfikacji" className="absolute top-32 right-[19px] w-[542px] border border-[#444] bg-[#d7e3f1] px-[7px] pb-[7px]">
    <div className="-mx-[7px] flex h-[25px] items-center bg-linear-to-b from-[#bac9d6] to-[#d7e3f1] px-[7px] pt-[6px]">
      <h2 className="flex-1 font-[Roboto,sans-serif] text-[12px] text-[#3c4650]">Wynik identyfikacji</h2>
      <button type="button" aria-label="close" className="mr-[2px] flex size-[13px] items-center justify-center rounded-xs border border-[#7787a0] bg-[#dfe8f2]">
        <svg width="7" height="7" stroke="#444" strokeWidth="1.800"><path d="m.5.5 6 6M6.500.5l-6 6" /></svg>
      </button>
    </div>
    <div className="bg-[#efefef]">
      <div className="flex h-[31px] items-center pl-[3px]">
        <M n="form" /><Sep /><Mini><TreeLines>{arrowDown}</TreeLines></Mini><Mini><TreeLines>{arrowUp}</TreeLines></Mini>
        <Mini><TreeLines>{arrowDown}<path d="m7 1 2 4 4 .5-3 3 1 4.500-4-2-4 2 1-4.500-3-3L5 5z" fill="#fce23a" stroke="#c99a00" /></TreeLines></Mini>
        <Sep /><M n="clear" /><Sep /><M n="copy" /><M n="print" off /><Sep /><M n="idSel" /><Arrow /><M n="wrench" />
      </div>
      <div className="h-[444px] overflow-hidden border border-[#b4b4b4] bg-white font-['Noto_Sans',sans-serif]">
        <table className="w-full table-fixed border-collapse text-left whitespace-nowrap">
          <colgroup><col className="w-[175px]" /><col /></colgroup>
          <thead>
            <tr className="h-[18px] border-b border-[#a8a8a8] bg-linear-to-b from-white to-[#ececec]">
              <th className="border-r border-[#c4c4c4] p-0 pl-[2px] font-normal">Obiekt</th>
              <th className="p-0 pl-[2px] font-normal">Wartość</th>
            </tr>
          </thead>
          <tbody className="leading-[15px] [&_td]:h-[15px] [&_td]:overflow-hidden [&_td]:p-0">
            <tr><td colSpan={2}><span className="flex items-center gap-2 pl-[6px] font-bold"><Fold open />G2_OSNOWA_WFS:Osnowa_grawimetryczna_-_bazowa</span></td></tr>
            <tr className="bg-[#efefef]"><td><span className="flex items-center gap-[9px] pl-[26px]"><Fold open />OBJECTID</span></td><td><span className="pl-[3px]">103</span></td></tr>
            <tr><td><span className="flex items-center gap-[9px] pl-[46px]"><Fold open={false} />(pochodne)</span></td><td /></tr>
            <tr className="bg-[#e7e6e2]"><td><span className="flex items-center gap-[9px] pl-[46px]"><Fold open={false} />(akcje)</span></td><td /></tr>
            {attrs.map(([k, v, link], i) => (
              <tr key={k} className={i % 2 ? "bg-[#e7e6e2]" : ""}>
                <td><span className="pl-[63px]">{k}</span></td>
                <td>{link ? <a href="#link" className="text-[#0000f0] underline">{v}</a> : <span className="pl-[3px]">{v}</span>}</td>
              </tr>
            ))}
          </tbody>
        </table>
      </div>
      <div className="flex items-center gap-[7px] px-[5px] pt-1 font-[Roboto,sans-serif]">
        <label htmlFor="Tryb">Tryb</label>
        <Combo id="Tryb" value="wybór warstwy" cls="h-6 flex-1" />
      </div>
      <div className="flex items-center gap-[5px] px-[5px] pt-2 pb-2 font-[Roboto,sans-serif]">
        <label htmlFor="Widok" className="text-[#888]">Widok</label>
        <Combo id="Widok" value="Drzewo" cls="h-[22px] w-[72px]" dim />
        <button type="button" className="ml-auto h-5 w-[45px] rounded-sm border border-[#b0b0b0] bg-linear-to-b from-white to-[#f0f0f0]">Pomoc</button>
      </div>
    </div>
  </div>
);

const menus: [string, string, string][] = [
  ["Pro", "j", "ekt"], ["", "E", "dycja"], ["", "W", "idok"], ["W", "a", "rstwa"], ["", "U", "stawienia"], ["", "W", "tyczki"], ["Wekt", "o", "r"],
  ["", "R", "aster"], ["", "B", "azy danych"], ["W ", "i", "nternecie"], ["Siatka", "", ""], ["Pro", "c", "essing"], ["", "P", "omoc"],
];
const WinBtn = ({ d, label }: { d: string; label: string }) => (
  <button type="button" aria-label={label} className="flex h-[17px] w-[31px] items-center justify-center rounded-xs border border-[#8393ad] bg-linear-to-b from-[#c6d2de] to-[#dce6f1]">
    <svg width="13" height="11" viewBox="0 0 13 11" fill="#fff" stroke="#555" strokeWidth="1"><path d={d} /></svg>
  </button>
);

export default function App() {
  return (
    <div className="relative flex h-screen w-full flex-col overflow-hidden border-[3px] border-b-4 border-[#0a5be0] bg-[#efefef] font-['Open_Sans',sans-serif] text-[11px] leading-4 text-black">
      <header className="flex h-[22px] shrink-0 items-center gap-[9px] border-t border-[#444] bg-linear-to-b from-[#bccad7] to-[#d7e3f1] pr-px pl-[2px] text-[#3c4650]">
        <svg width="16" height="16" viewBox="0 0 16 16" fill="none" aria-hidden="true">
          <circle cx="7.500" cy="7.500" r="5.500" stroke="#6ba52f" strokeWidth="3.200" />
          <path d="M8 7.500v2l5.500 6H16L9.500 7.500z" fill="#518a22" />
          <path d="M6 6h4l-1 4z" fill="#ee7913" />
        </svg>
        <h1 className="flex-1 font-[Roboto,sans-serif] text-[12px]">*Projekt bez nazwy — QGIS</h1>
        <div className="flex gap-[2px]">
          <WinBtn label="minimize" d="M1.500 6.500h10v3h-10z" />
          <WinBtn label="restore" d="M5 .5h7v6H5zM1 4h7v6H1zM3 6.500h3v1.500H3z" />
          <WinBtn label="close" d="M1 1h3.500l2 2.500L8.500 1H12L8.500 5.500 12 10H8.500l-2-2.500L4.500 10H1l3.500-4.500z" />
        </div>
      </header>
      <nav className="flex h-5 shrink-0 items-center gap-[15px] border-b border-[#d6d6d6] pl-[10px] text-[#9b9b9b]">
        {menus.map(([a, b, c]) => <a key={a + b + c} href="#menu">{a}<u>{b}</u>{c}</a>)}
      </nav>
      <div className="shrink-0">
        <Bar>
          <Grip first />{tools(["new", "open", "save", "layout", "layoutMgr", "style"])}
          <Grip />{tools(["hand", "pan", "zin", "zout", "zfull", "zsel", "zlayer"])}<Tool n="znat" off />
          <Tool n="zlast" /><Tool n="znext" off />{tools(["mapNew", "map3d", "bmNew", "bmShow", "clock", "refresh"])}
          <Grip /><Tool n="identify" on />{tools(["table", "abacus", "gear", "sigma", "ruler"])}<Arrow />
          <Tool n="tip" /><Tool n="action" off /><Arrow dim /><Tool n="text" /><Arrow /><Grip />
        </Bar>
        <Bar>
          <Grip first />{tools(["dsm", "box", "vnew", "fnew", "chip"])}<Sep /><Tool n="vbox" /><Sep />
          <Grip /><Tool n="pens" off menu />{tools(["pen", "saveEdit", "dots", "vertex"], true)}<Arrow dim />{tools(["multi", "trash", "cut", "copy"], true)}
          <span className="flex w-9 shrink-0 justify-end"><Chevrons /></span>
          <Grip />{tools(["abc", "chart"])}<Sep />{tools(["abPin", "abcRed"])}<Sep />{tools(["abY", "abcEye", "abcArr", "abcRot", "abcEd"])}
          <Grip />{tools(["python", "blob", "bino", "mapTile"])}
          <Grip /><Tool n="selRect" /><Arrow /><Tool n="selForm" /><Arrow /><Tool n="selNone" /><Arrow /><Tool n="selLoc" />
          <Grip />{tools(["rotF", "mirF"], true)}
          <span className="ml-auto pr-1"><Chevrons /></span>
        </Bar>
        <Bar>
          <Grip first /><Tool n="magnet" /><Tool n="snapV" off menu /><Tool n="snapP" on menu />
          <Spin id="tolerance" value="12" w="w-[81px]" dim />
          <Combo id="unit" value="px" cls="ml-px h-[22px] w-[88px] shrink-0" dim />
          <Tool n="topo" /><Tool n="shapes" menu />{tools(["cross", "self"], true)}<Arrow dim /><Tool n="trace" off />
          <Grip />{tools(["osmSearch", "osmEdit"])}
        </Bar>
      </div>
      <div className="flex min-h-0 flex-1">
        <aside className="flex w-[52px] shrink-0 flex-col border-r border-[#b4b4b4] bg-linear-to-r from-[#fbfbfb] to-[#ececec]">
          <span className="flex h-3 items-center pl-5"><svg width="17" height="4"><path d="M0 .5h17M0 3.500h17" stroke="#b4b4b4" strokeDasharray="1 2" /></svg></span>
          {side.map(([n, m]) => (
            <div key={n} className="flex h-8 shrink-0 items-center gap-[6px] pl-2">
              <button type="button" aria-label={n}><Svg>{ic[n]}</Svg></button>
              {m && <Tri />}
            </div>
          ))}
        </aside>
        <div className="flex w-[325px] shrink-0 flex-col"><Layers /><Browser /></div>
        <span className="flex w-[6px] shrink-0 items-center justify-center"><svg width="1" height="17"><path d="M.5 0v17" stroke="#999" strokeDasharray="1 2" /></svg></span>
        <MapView />
      </div>
      <footer className="flex h-7 shrink-0 items-center border-t border-[#c4c4c4] pr-[6px] pl-1 font-[Roboto,sans-serif]">
        <label className="flex h-[21px] w-[200px] shrink-0 items-center gap-[5px] rounded-sm border border-[#b0b0b0] bg-white pl-2">
          <svg width="14" height="14" fill="none" stroke="#888" strokeWidth="1.300"><circle cx="5.500" cy="5.500" r="4.500" /><path d="m9 9 4 4" /></svg>
          <input aria-label="search" placeholder="Szukana fraza (Ctrl+K)" className="min-w-0 flex-1 outline-none placeholder:text-[#777]" />
        </label>
        <span className="ml-2 flex-1 whitespace-nowrap">Identyfikacja zakończona.</span>
        <label htmlFor="coord">Współrzędne</label>
        <input id="coord" defaultValue="622775,506750" className="mr-1 ml-1 h-[21px] w-[91px] rounded-sm border border-[#b0b0b0] bg-white px-[5px]" />
        <svg width="16" height="16" viewBox="0 0 16 16" fill="none" stroke="#444" strokeWidth="1.200"><path d="M1 4 4 1l3 1 3 4-3 4-5-3zM7 10q0-4 4-4t4 4-4 5-4-5zM9 10h4M4 3l4 5M2 12l4-2M12 1l-2 4M15 3l-3 3" /><circle cx="11" cy="11" r="1.500" fill="#444" /></svg>
        <label htmlFor="scale" className="mr-1 ml-3">Skala</label>
        <Combo id="scale" value="1:122842" cls="h-[21px] w-[80px] shrink-0" split />
        <svg width="12" height="14" viewBox="0 0 12 14" fill="none" className="ml-3"><path d="M2.500 7V4a3.500 3.500 0 0 1 7 0v3" stroke="#888" strokeWidth="1.800" /><rect y="6.500" width="12" height="7.500" rx="1" fill="#555" /></svg>
        <label htmlFor="zoom" className="mr-[3px] ml-2">Powiększenie</label>
        <Spin id="zoom" value="100%" w="w-[87px]" />
        <label htmlFor="rotation" className="mr-2 ml-2">Obrót</label>
        <Spin id="rotation" value="0,0 °" w="w-[84px]" />
        <label className="mr-[18px] ml-[6px] flex items-center gap-1"><Check label="Renderuj" />Renderuj</label>
        <svg width="14" height="14" viewBox="0 0 14 14" fill="#888" stroke="#eee" strokeWidth=".8"><circle cx="7" cy="7" r="6.500" stroke="#666" /><path d="M0 7h14M1 4h12M1 10h12M7 0v14" /><ellipse cx="7" cy="7" rx="3.200" ry="6.500" fill="none" /></svg>
        <button type="button" className="ml-1">EPSG:2180</button>
        <svg width="15" height="14" viewBox="0 0 15 14" className="ml-5"><path d="M7.500 0C12 0 15 2.500 15 5.500c0 2-1 3.500-2.500 4.500l1 4-4-3h-2C3 11 0 8.500 0 5.500S3 0 7.500 0z" fill="#555" /><path d="M3.500 5.500h8" stroke="#fff" strokeWidth="1.600" strokeDasharray="1.600 1.600" /></svg>
      </footer>
      <Identify />
    </div>
  );
}
